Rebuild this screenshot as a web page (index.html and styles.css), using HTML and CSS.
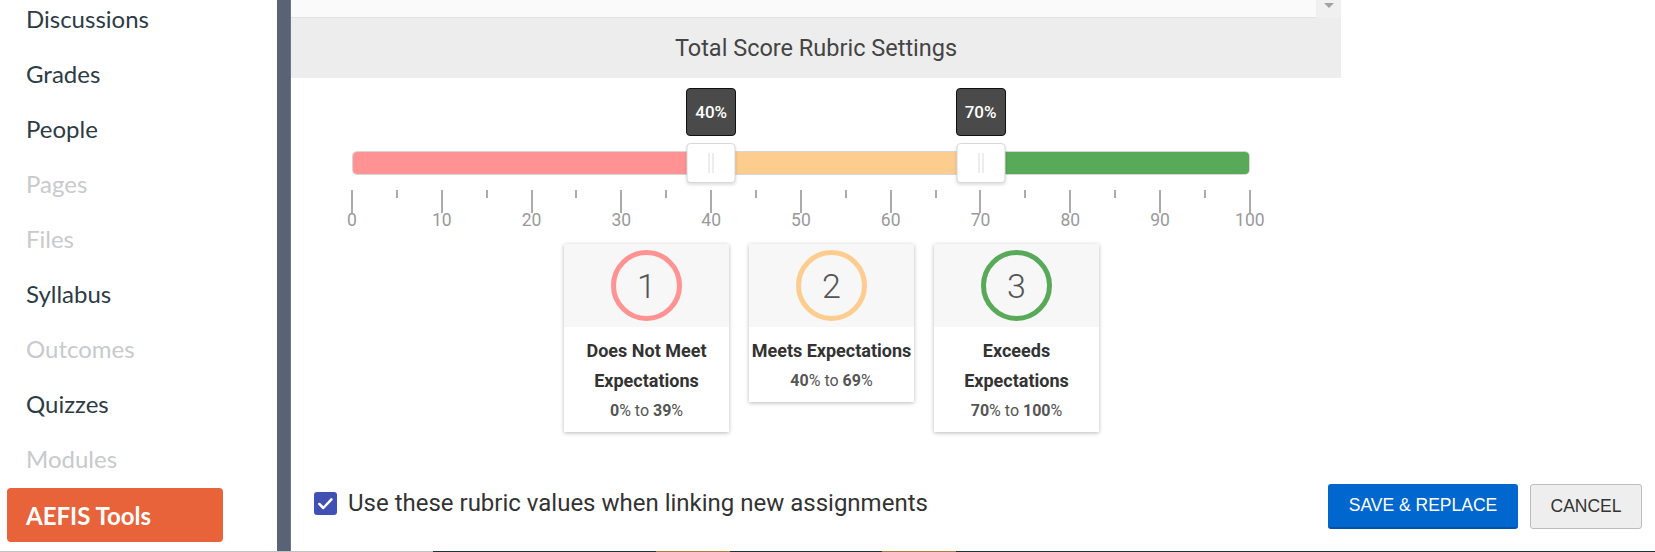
FILE: index.html
```html
<!DOCTYPE html>
<html lang="en">
<head>
<meta charset="utf-8">
<title>Total Score Rubric Settings</title>
<link rel="stylesheet" href="styles.css">
</head>
<body>
<div class="app">
  <nav class="sidebar">
    <ul class="nav">
      <li class="nav-item">Discussions</li>
      <li class="nav-item">Grades</li>
      <li class="nav-item">People</li>
      <li class="nav-item nav-item--muted">Pages</li>
      <li class="nav-item nav-item--muted">Files</li>
      <li class="nav-item">Syllabus</li>
      <li class="nav-item nav-item--muted">Outcomes</li>
      <li class="nav-item">Quizzes</li>
      <li class="nav-item nav-item--muted">Modules</li>
      <li class="nav-item nav-item--tool"><span class="tool-btn">AEFIS Tools</span></li>
    </ul>
  </nav>
  <div class="divider"></div>
  <main class="main">
    <div class="panel">
      <div class="panel-top">
        <div class="panel-top-fill"></div>
        <div class="scroll-col"><span class="scroll-arrow"></span></div>
      </div>
      <div class="panel-head">Total Score Rubric Settings</div>
    </div>

    <div class="slider">
      <div class="track">
        <div class="seg seg-red" style="width:40%"></div>
        <div class="seg seg-orange" style="width:30%"></div>
        <div class="seg seg-green" style="width:30%"></div>
      </div>
      <div class="bubble" style="left:40%">40%</div>
      <div class="handle" style="left:40%"><span class="grip"></span></div>
      <div class="bubble" style="left:70%">70%</div>
      <div class="handle" style="left:70%"><span class="grip"></span></div>
      <div class="ticks">
        <div class="tick tick--major"><span class="tick-line"></span><span class="tick-label">0</span></div>
        <div class="tick"><span class="tick-line"></span></div>
        <div class="tick tick--major"><span class="tick-line"></span><span class="tick-label">10</span></div>
        <div class="tick"><span class="tick-line"></span></div>
        <div class="tick tick--major"><span class="tick-line"></span><span class="tick-label">20</span></div>
        <div class="tick"><span class="tick-line"></span></div>
        <div class="tick tick--major"><span class="tick-line"></span><span class="tick-label">30</span></div>
        <div class="tick"><span class="tick-line"></span></div>
        <div class="tick tick--major"><span class="tick-line"></span><span class="tick-label">40</span></div>
        <div class="tick"><span class="tick-line"></span></div>
        <div class="tick tick--major"><span class="tick-line"></span><span class="tick-label">50</span></div>
        <div class="tick"><span class="tick-line"></span></div>
        <div class="tick tick--major"><span class="tick-line"></span><span class="tick-label">60</span></div>
        <div class="tick"><span class="tick-line"></span></div>
        <div class="tick tick--major"><span class="tick-line"></span><span class="tick-label">70</span></div>
        <div class="tick"><span class="tick-line"></span></div>
        <div class="tick tick--major"><span class="tick-line"></span><span class="tick-label">80</span></div>
        <div class="tick"><span class="tick-line"></span></div>
        <div class="tick tick--major"><span class="tick-line"></span><span class="tick-label">90</span></div>
        <div class="tick"><span class="tick-line"></span></div>
        <div class="tick tick--major"><span class="tick-line"></span><span class="tick-label">100</span></div>
      </div>
    </div>

    <div class="cards">
      <div class="card">
        <div class="card-top"><span class="ring ring--red">1</span></div>
        <div class="card-body">
          <div class="card-title">Does Not Meet Expectations</div>
          <div class="card-range"><b>0</b>% to <b>39</b>%</div>
        </div>
      </div>
      <div class="card">
        <div class="card-top"><span class="ring ring--orange">2</span></div>
        <div class="card-body">
          <div class="card-title">Meets Expectations</div>
          <div class="card-range"><b>40</b>% to <b>69</b>%</div>
        </div>
      </div>
      <div class="card">
        <div class="card-top"><span class="ring ring--green">3</span></div>
        <div class="card-body">
          <div class="card-title">Exceeds Expectations</div>
          <div class="card-range"><b>70</b>% to <b>100</b>%</div>
        </div>
      </div>
    </div>

    <div class="footer">
      <label class="check-group">
        <span class="checkbox">
          <svg viewBox="0 0 24 24" width="23" height="23"><path d="M5.5 12.5l4.2 4.2 8.5-9" fill="none" stroke="#fff" stroke-width="2.6" stroke-linecap="round" stroke-linejoin="round"/></svg>
        </span>
        <span class="check-label">Use these rubric values when linking new assignments</span>
      </label>
      <div class="buttons">
        <button class="btn btn-primary">SAVE &amp; REPLACE</button>
        <button class="btn btn-secondary">CANCEL</button>
      </div>
    </div>
  </main>
</div>
<div class="baseline">
  <span class="bl bl-gray"></span>
  <span class="bl bl-dark bl-a"></span>
  <span class="bl bl-orange"></span>
  <span class="bl bl-dark bl-b"></span>
  <span class="bl bl-orange bl-o2"></span>
  <span class="bl bl-dark bl-rest"></span>
</div>
</body>
</html>
```

FILE: styles.css
```css
* { box-sizing: border-box; }
html, body { margin: 0; padding: 0; }
body {
  width: 1655px;
  height: 552px;
  overflow: hidden;
  background: #fff;
  font-family: Roboto, "Liberation Sans", sans-serif;
  display: flex;
  flex-direction: column;
}
.app {
  display: flex;
  height: 551px;
}

/* Sidebar */
.sidebar {
  width: 277px;
  flex: none;
  overflow: hidden;
}
.nav {
  list-style: none;
  margin: -9.5px 0 0 0;
  padding: 0;
}
.nav-item {
  height: 55px;
  display: flex;
  align-items: center;
  padding-left: 26px;
  font-family: Lato, "Liberation Sans", sans-serif;
  font-size: 24px;
  color: #2d3b45;
}
.nav-item--muted { color: #c8cacc; }
.nav-item--tool { padding-left: 7px; }
.tool-btn {
  display: flex;
  align-items: center;
  width: 216px;
  height: 54px;
  margin-top: 4px;
  padding-left: 19px;
  background: #e8623a;
  border-radius: 4px;
  color: #fff;
  font-weight: 700;
}
.divider {
  width: 14px;
  flex: none;
  background: #586376;
  border-right: 1px solid #6b7586;
}

/* Main */
.main {
  flex: 1;
  display: flex;
  flex-direction: column;
  min-width: 0;
}
.panel { width: 1050px; }
.panel-top {
  display: flex;
  height: 18px;
}
.panel-top-fill {
  flex: 1;
  background: #fafafa;
  border-bottom: 1px solid #e2e2e2;
}
.scroll-col {
  width: 25px;
  background: #f0f0f0;
  display: flex;
  justify-content: center;
}
.scroll-arrow {
  margin-top: 3px;
  width: 0;
  height: 0;
  border-left: 5.5px solid transparent;
  border-right: 5.5px solid transparent;
  border-top: 5px solid #a2a2a2;
}
.panel-head {
  height: 60px;
  background: #ededed;
  display: flex;
  align-items: center;
  justify-content: center;
  font-size: 23.5px;
  color: #444;
}

/* Slider */
.slider {
  position: relative;
  width: 898px;
  margin-left: 61px;
  padding-top: 73px;
}
.track {
  display: flex;
  height: 24px;
  border-radius: 5px;
  overflow: hidden;
  border: 1px solid #d6d6d6;
}
.seg { height: 100%; }
.seg-red { background: #ff9393; }
.seg-orange { background: #fdcc8f; }
.seg-green { background: #58a958; }

.bubble {
  position: absolute;
  top: 10px;
  width: 50px;
  height: 48px;
  transform: translateX(-50%);
  background: #4a4a4a;
  border: 1.5px solid #111;
  border-radius: 4px;
  color: #fff;
  font-size: 17px;
  font-weight: 500;
  display: flex;
  align-items: center;
  justify-content: center;
}
.handle {
  position: absolute;
  top: 65px;
  width: 49px;
  height: 40px;
  transform: translateX(-50%);
  background: #fff;
  border: 1px solid #d8d8d8;
  border-radius: 4px;
  box-shadow: 0 2px 3px rgba(0, 0, 0, 0.12);
  display: flex;
  align-items: center;
  justify-content: center;
}
.grip {
  width: 5px;
  height: 20px;
  border-left: 1px solid #dcdcdc;
  border-right: 1px solid #dcdcdc;
}

.ticks {
  display: flex;
  justify-content: space-between;
  width: 900px;
  margin: 15px 0 0 -1px;
}
.tick {
  width: 2px;
  display: flex;
  flex-direction: column;
  align-items: center;
}
.tick-line {
  display: block;
  width: 2px;
  height: 8px;
  background: #ababab;
}
.tick--major .tick-line { height: 23px; }
.tick-label {
  margin-top: -3px;
  line-height: 20px;
  font-size: 17.5px;
  color: #9a9a9a;
  white-space: nowrap;
}

/* Cards */
.cards {
  display: flex;
  align-items: flex-start;
  gap: 20px;
  margin: 14px 0 0 273px;
}
.card {
  width: 165px;
  background: #fff;
  box-shadow: 0 1px 4px rgba(0, 0, 0, 0.28);
}
.card-top {
  height: 83px;
  background: #f7f7f7;
  display: flex;
  align-items: center;
  justify-content: center;
}
.ring {
  width: 71px;
  height: 71px;
  border-radius: 50%;
  border: 5px solid;
  display: flex;
  align-items: center;
  justify-content: center;
  font-size: 34px;
  font-weight: 300;
  color: #555;
}
.ring--red { border-color: #ff9393; }
.ring--orange { border-color: #fdcc8f; }
.ring--green { border-color: #58a958; }
.card-body {
  padding: 9px 2px 11px;
  text-align: center;
}
.card-title {
  font-size: 18px;
  font-weight: 700;
  line-height: 30px;
  color: #333;
}
.card-range {
  margin-top: 5px;
  font-size: 16px;
  line-height: 20px;
  color: #555;
}

/* Footer */
.footer {
  margin-top: auto;
  margin-bottom: 22px;
  display: flex;
  align-items: flex-start;
  padding: 0 13px 0 23px;
}
.check-group {
  display: flex;
  align-items: center;
  gap: 11px;
  margin-top: 5px;
}
.checkbox {
  width: 23px;
  height: 23px;
  border-radius: 3px;
  background: #3f51b5;
  display: flex;
}
.check-label {
  font-size: 24px;
  color: #333;
}
.buttons {
  margin-left: auto;
  display: flex;
  gap: 12px;
}
.btn {
  height: 45px;
  font-family: "Liberation Sans", Arial, sans-serif;
  font-size: 17.5px;
  border-radius: 3px;
  padding: 0;
}
.btn-primary {
  width: 190px;
  background: #0067ce;
  color: #fff;
  border: none;
  border-bottom: 2px solid #0055aa;
}
.btn-secondary {
  width: 112px;
  background: #eeeeee;
  color: #333;
  border: 1.5px solid #bdbdbd;
}

/* Bottom line */
.baseline {
  display: flex;
  height: 1px;
}
.bl { display: block; height: 1px; }
.bl-gray { width: 433px; background: #c2c2c2; }
.bl-dark { background: #243038; }
.bl-a { width: 223px; }
.bl-orange { width: 74px; background: #b5783f; }
.bl-b { width: 152px; }
.bl-rest { flex: 1; }
```
